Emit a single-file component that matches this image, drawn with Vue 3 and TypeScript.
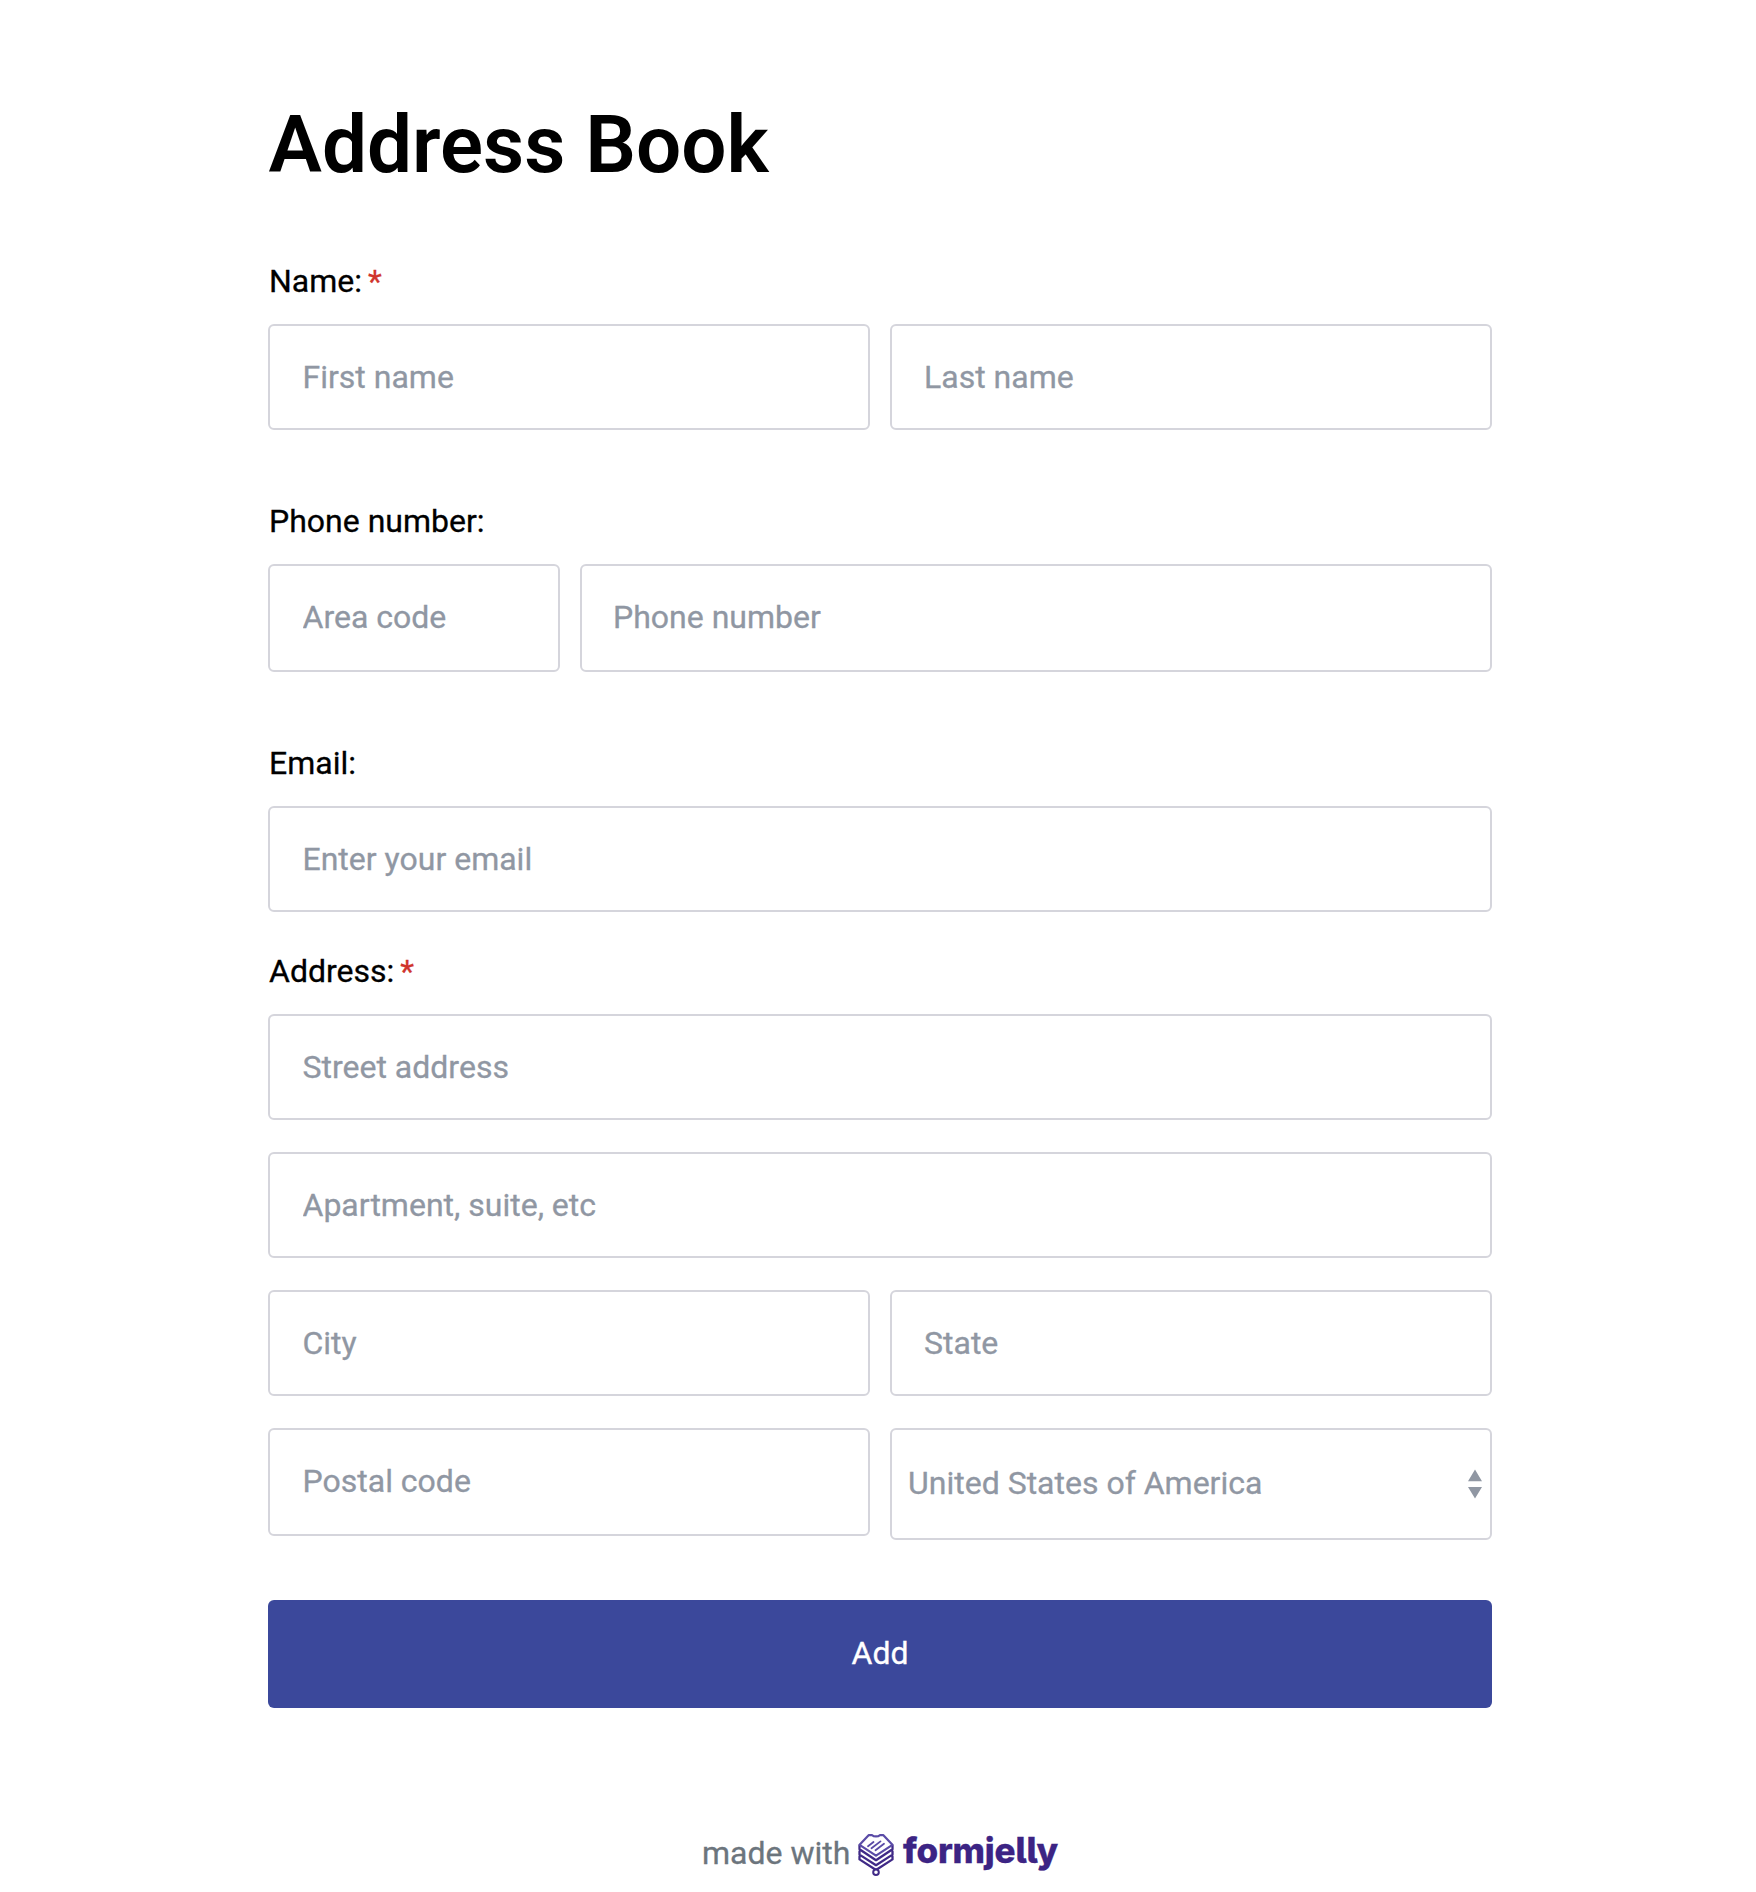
<script setup lang="ts">
interface Field {
  name: string
  placeholder: string
  tall?: boolean
}
interface Group {
  label: string
  required?: boolean
  tight?: boolean
  rows: Field[][]
}

const groups: Group[] = [
  {
    label: 'Name:',
    required: true,
    rows: [[{ name: 'first', placeholder: 'First name' }, { name: 'last', placeholder: 'Last name' }]],
  },
  {
    label: 'Phone number:',
    rows: [[
      { name: 'area', placeholder: 'Area code', tall: true },
      { name: 'phone', placeholder: 'Phone number', tall: true },
    ]],
  },
  { label: 'Email:', tight: true, rows: [[{ name: 'email', placeholder: 'Enter your email' }]] },
  {
    label: 'Address:',
    required: true,
    tight: true,
    rows: [
      [{ name: 'street', placeholder: 'Street address' }],
      [{ name: 'apartment', placeholder: 'Apartment, suite, etc' }],
      [{ name: 'city', placeholder: 'City' }, { name: 'state', placeholder: 'State' }],
      [{ name: 'postal', placeholder: 'Postal code', tall: true }, { name: 'country', placeholder: '' }],
    ],
  },
]
</script>

<template>
  <main class="page">
    <form class="form" @submit.prevent>
      <h1 class="title">Address Book</h1>
      <section v-for="g in groups" :key="g.label" class="group" :class="{ tight: g.tight }">
        <div class="label">{{ g.label }}<span v-if="g.required" class="star">*</span></div>
        <div class="rows">
          <div
            v-for="(row, i) in g.rows"
            :key="i"
            class="row"
            :class="{ pair: row.length === 2, phone: row[0].name === 'area' }"
          >
            <template v-for="f in row" :key="f.name">
              <div v-if="f.name === 'country'" class="select">
                <span>United States of America</span>
                <svg class="arrows" width="14" height="30" viewBox="0 0 14 30">
                  <path d="M7 .5 14 12.3H0zM0 18h14L7 29.5z" fill="#9097a3" />
                </svg>
              </div>
              <input
                v-else
                class="input"
                :class="[{ tall: f.tall }, f.name]"
                type="text"
                :placeholder="f.placeholder"
                :aria-label="f.placeholder"
              />
            </template>
          </div>
        </div>
      </section>
      <button class="submit" type="submit">Add</button>
    </form>
    <footer class="footer">
      <span class="made">made with</span>
      <svg class="mark" width="36" height="43" viewBox="0 0 36 43" fill="none" stroke="#402a87" stroke-linejoin="round" stroke-linecap="round">
        <path d="M1.5 11.4v3.9L18 26.2l16.5-10.9v-3.9M1.5 17.4v3.2L18 31.2l16.5-10.6v-3.2M1.5 22.4v3L18 36l16.5-10.6v-3" stroke-width="2.3" />
        <path d="M10.6 1.2h3.6q1.2 1.2 3.8 1.2t3.8-1.2h3.6L34.4 10.8 18 21.6 1.6 10.8z" stroke="#5a4ba6" stroke-width="2.2" />
        <path d="M10 12.2 15.5 8M13.5 14.2 22.5 7.4M17.5 16.2 26 9.8" stroke="#5a4ba6" stroke-width="1.8" />
        <circle cx="18" cy="38.3" r="2.8" stroke-width="2" fill="#fff" />
      </svg>
      <span class="wordmark">formjelly</span>
    </footer>
  </main>
</template>

<style>
body {
  margin: 0;
  background: #fff;
}
</style>

<style scoped>
.page {
  box-sizing: border-box;
  height: 1892px;
  overflow: hidden;
  padding: 97px 264px 0 268px;
  font-family: Roboto, 'Liberation Sans', sans-serif;
  font-size: 32px;
  color: #000;
  -webkit-text-stroke: 0.3px currentColor;
}
.form {
  display: flex;
  flex-direction: column;
}
.title {
  margin: 0 0 65px;
  padding-left: 0.5px;
  font-size: 80px;
  line-height: 96px;
  font-weight: 600;
  -webkit-text-stroke: 0;
}
.group {
  margin-bottom: 68px;
}
.group.tight {
  margin-bottom: 36px;
}
.group:last-of-type {
  margin-bottom: 60px;
}
.label {
  height: 48px;
  line-height: 46px;
  margin-bottom: 18px;
  padding-left: 1px;
}
.star {
  margin-left: 6px;
  color: #d0342c;
}
.rows {
  display: flex;
  flex-direction: column;
  gap: 32px;
}
.row {
  display: grid;
  grid-template-columns: 1fr;
  align-items: start;
  column-gap: 20px;
}
.row.pair {
  grid-template-columns: 1fr 1fr;
}
.row.phone {
  grid-template-columns: 292px 1fr;
}
.input,
.select {
  box-sizing: border-box;
  width: 100%;
  min-width: 0;
  height: 106px;
  border: 2px solid #d5d5dc;
  border-radius: 6px;
  background: #fff;
  color: #9097a3;
  font: inherit;
}
.input {
  padding: 0 32px 1px 32.5px;
  outline: none;
}
.input.last,
.input.state {
  padding-left: 32px;
}
.input.phone {
  padding-left: 31px;
}
.input.tall {
  height: 108px;
  padding-bottom: 3px;
}
.input::placeholder {
  color: #9097a3;
  opacity: 1;
}
.select {
  display: flex;
  align-items: center;
  justify-content: space-between;
  height: 112px;
  padding: 0 8px 2px 16px;
}
.arrows {
  position: relative;
  top: 1px;
}
.submit {
  height: 108px;
  border: 0;
  border-radius: 6px;
  padding: 0 0 2px;
  background: #3b489b;
  color: #fff;
  font: inherit;
}
.footer {
  display: flex;
  align-items: flex-start;
  margin: 126px 0 0 434px;
  height: 43px;
}
.made {
  width: 156px;
  line-height: 38px;
  color: #6c757d;
  white-space: nowrap;
}
.wordmark {
  margin-left: 9px;
  font-family: Inter, sans-serif;
  font-feature-settings: 'cv05';
  font-weight: 800;
  font-size: 35px;
  letter-spacing: -0.2px;
  line-height: 32px;
  color: #3c2484;
}
</style>
